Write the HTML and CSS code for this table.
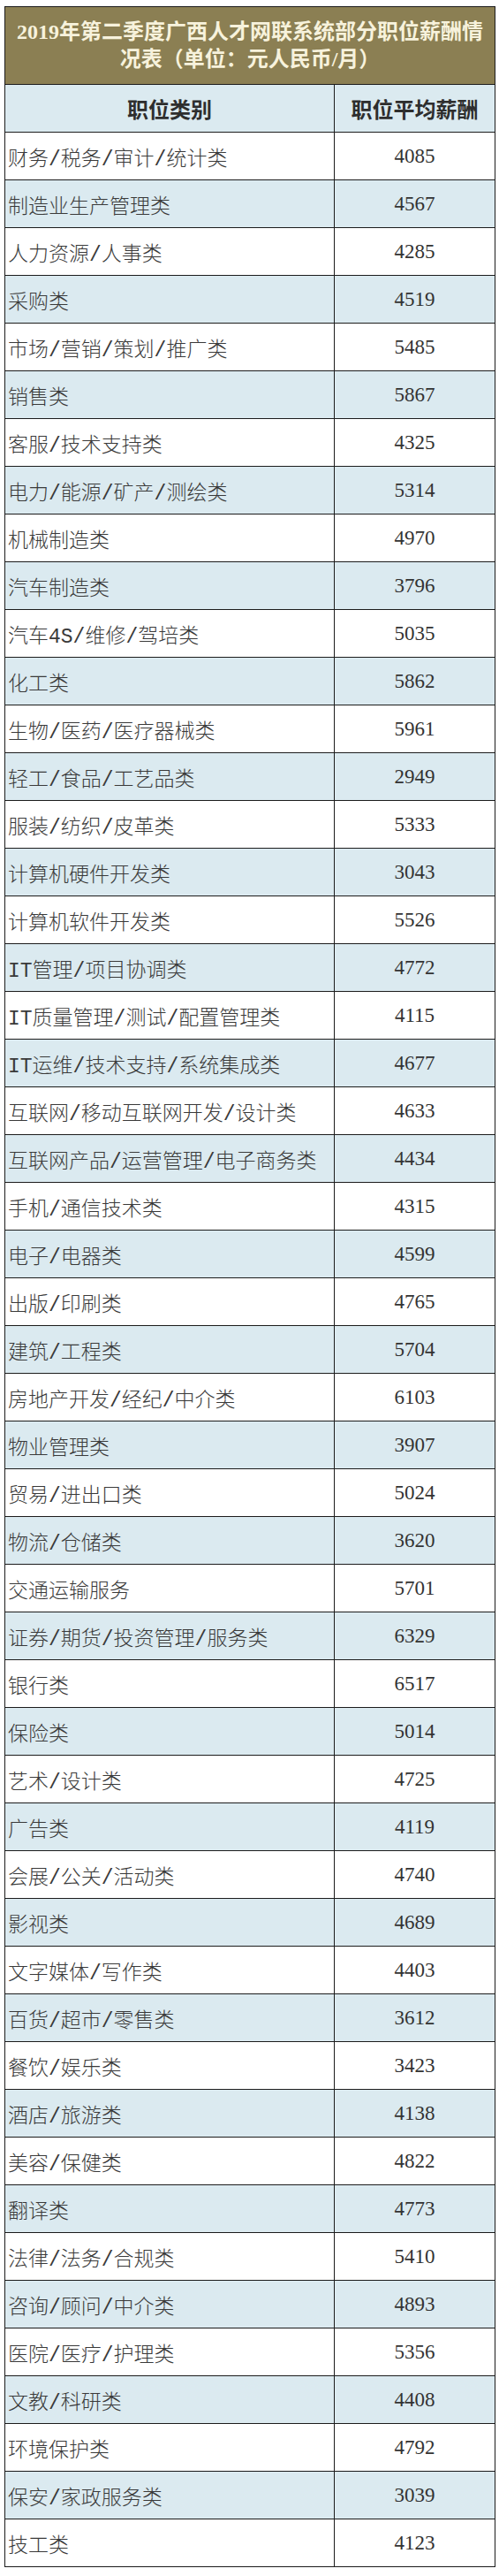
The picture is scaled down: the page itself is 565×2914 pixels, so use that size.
FILE: index.html
```html
<!DOCTYPE html>
<html lang="zh-CN">
<head>
<meta charset="utf-8">
<title>2019年第二季度广西人才网联系统部分职位薪酬情况表</title>
<link rel="stylesheet" href="styles.css">
</head>
<body>
<table class="salary">
  <colgroup><col class="c-name"><col class="c-val"></colgroup>
  <thead>
    <tr class="title-row"><th colspan="2" class="title">2019年第二季度广西人才网联系统部分职位薪酬情<br>况表（单位：元人民币/月）</th></tr>
    <tr class="head-row"><th>职位类别</th><th>职位平均薪酬</th></tr>
  </thead>
  <tbody>
    <tr><td>财务/税务/审计/统计类</td><td>4085</td></tr>
    <tr><td>制造业生产管理类</td><td>4567</td></tr>
    <tr><td>人力资源/人事类</td><td>4285</td></tr>
    <tr><td>采购类</td><td>4519</td></tr>
    <tr><td>市场/营销/策划/推广类</td><td>5485</td></tr>
    <tr><td>销售类</td><td>5867</td></tr>
    <tr><td>客服/技术支持类</td><td>4325</td></tr>
    <tr><td>电力/能源/矿产/测绘类</td><td>5314</td></tr>
    <tr><td>机械制造类</td><td>4970</td></tr>
    <tr><td>汽车制造类</td><td>3796</td></tr>
    <tr><td>汽车4S/维修/驾培类</td><td>5035</td></tr>
    <tr><td>化工类</td><td>5862</td></tr>
    <tr><td>生物/医药/医疗器械类</td><td>5961</td></tr>
    <tr><td>轻工/食品/工艺品类</td><td>2949</td></tr>
    <tr><td>服装/纺织/皮革类</td><td>5333</td></tr>
    <tr><td>计算机硬件开发类</td><td>3043</td></tr>
    <tr><td>计算机软件开发类</td><td>5526</td></tr>
    <tr><td>IT管理/项目协调类</td><td>4772</td></tr>
    <tr><td>IT质量管理/测试/配置管理类</td><td>4115</td></tr>
    <tr><td>IT运维/技术支持/系统集成类</td><td>4677</td></tr>
    <tr><td>互联网/移动互联网开发/设计类</td><td>4633</td></tr>
    <tr><td>互联网产品/运营管理/电子商务类</td><td>4434</td></tr>
    <tr><td>手机/通信技术类</td><td>4315</td></tr>
    <tr><td>电子/电器类</td><td>4599</td></tr>
    <tr><td>出版/印刷类</td><td>4765</td></tr>
    <tr><td>建筑/工程类</td><td>5704</td></tr>
    <tr><td>房地产开发/经纪/中介类</td><td>6103</td></tr>
    <tr><td>物业管理类</td><td>3907</td></tr>
    <tr><td>贸易/进出口类</td><td>5024</td></tr>
    <tr><td>物流/仓储类</td><td>3620</td></tr>
    <tr><td>交通运输服务</td><td>5701</td></tr>
    <tr><td>证券/期货/投资管理/服务类</td><td>6329</td></tr>
    <tr><td>银行类</td><td>6517</td></tr>
    <tr><td>保险类</td><td>5014</td></tr>
    <tr><td>艺术/设计类</td><td>4725</td></tr>
    <tr><td>广告类</td><td>4119</td></tr>
    <tr><td>会展/公关/活动类</td><td>4740</td></tr>
    <tr><td>影视类</td><td>4689</td></tr>
    <tr><td>文字媒体/写作类</td><td>4403</td></tr>
    <tr><td>百货/超市/零售类</td><td>3612</td></tr>
    <tr><td>餐饮/娱乐类</td><td>3423</td></tr>
    <tr><td>酒店/旅游类</td><td>4138</td></tr>
    <tr><td>美容/保健类</td><td>4822</td></tr>
    <tr><td>翻译类</td><td>4773</td></tr>
    <tr><td>法律/法务/合规类</td><td>5410</td></tr>
    <tr><td>咨询/顾问/中介类</td><td>4893</td></tr>
    <tr><td>医院/医疗/护理类</td><td>5356</td></tr>
    <tr><td>文教/科研类</td><td>4408</td></tr>
    <tr><td>环境保护类</td><td>4792</td></tr>
    <tr><td>保安/家政服务类</td><td>3039</td></tr>
    <tr><td>技工类</td><td>4123</td></tr>
  </tbody>
</table>
</body>
</html>
```
FILE: styles.css
```css
html, body {
  margin: 0;
  padding: 0;
  background: #ffffff;
}

body {
  padding: 7px 0 0 5px;
}

.salary {
  width: 555px;
  table-layout: fixed;
  border-collapse: collapse;
  border: 1px solid #1c1c1c;
}

.c-name { width: 373px; }
.c-val { width: 182px; }

.salary th,
.salary td {
  border: 1px solid #1c1c1c;
  padding: 0;
  vertical-align: middle;
}

.title-row { height: 88px; }

.title {
  background: #8b7f53;
  color: #f7f2dc;
  font-family: "Liberation Serif", "Noto Sans CJK SC", serif;
  font-weight: 700;
  font-size: 24px;
  line-height: 31px;
  text-align: center;
  letter-spacing: 0;
}

.head-row { height: 54px; }

.head-row th {
  background: #dbeaf0;
  color: #2e2e2e;
  font-family: "Noto Sans CJK SC", sans-serif;
  font-weight: 700;
  font-size: 24px;
  text-align: center;
}

.salary tbody tr { height: 54px; }

.salary tbody tr:nth-child(even) td { background: #dbeaf0; }

.salary tbody td:first-child {
  font-family: "Liberation Mono", "Noto Sans CJK SC", monospace;
  font-weight: 300;
  font-size: 23px;
  color: #3a3a3a;
  text-align: left;
  padding-left: 3px;
  white-space: nowrap;
}

.salary tbody td:last-child {
  font-family: "Liberation Serif", serif;
  font-size: 23px;
  color: #333333;
  text-align: center;
}
```
